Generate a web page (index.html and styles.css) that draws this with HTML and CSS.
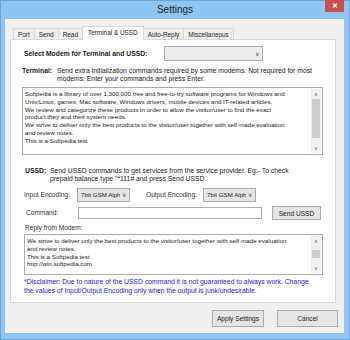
FILE: index.html
```html
<!DOCTYPE html>
<html lang="en">

<head>
    <meta charset="utf-8">
    <title>Settings</title>
    <link rel="stylesheet" href="styles.css">
</head>

<body>
    <div class="vindue">
        <div class="titel">
            <span class="titel-plads"></span>
            <span class="titel-tekst">Settings</span>
            <button class="luk">&#x2715;</button>
        </div>

        <div class="klient">
            <div class="faner">
                <span class="fane">Port</span>
                <span class="fane">Send</span>
                <span class="fane">Read</span>
                <span class="fane valgt">Terminal &amp; USSD</span>
                <span class="fane">Auto-Reply</span>
                <span class="fane">Miscellaneous</span>
            </div>

            <div class="panel">
                <div class="modem-linje">
                    <b>Select Modem for Terminal and USSD:</b>
                    <div class="vaelg bred"><span></span><i class="pil">&#x2228;</i></div>
                </div>

                <div class="info terminal">
                    <b>Terminal:</b>
                    <p>Send extra initialization commands required by some modems. Not required for most<br>modems. Enter your commands and press Enter.</p>
                </div>

                <div class="tekstboks stor">
                    <div class="tekst">
                        Softpedia is a library of over 1,300,000 free and free-to-try software programs for Windows and<br>
                        Unix/Linux, games, Mac software, Windows drivers, mobile devices and IT-related articles.<br>
                        We review and categorize these products in order to allow the visitor/user to find the exact<br>
                        product they and their system needs.<br>
                        We strive to deliver only the best products to the visitor/user together with self-made evaluation<br>
                        and review notes.<br>
                        This is a Softpedia test
                    </div>
                    <div class="rulle">
                        <span class="rulle-pil">&#x2227;</span>
                        <span class="rulle-greb"></span>
                        <span class="rulle-pil">&#x2228;</span>
                    </div>
                </div>

                <div class="info ussd">
                    <b>USSD:</b>
                    <p>Send USSD commands to get services from the service provider. Eg:- To check<br>prepaid balance type "*111# and press Send USSD.</p>
                </div>

                <div class="kodning">
                    <span class="etiket">Input Encoding:</span>
                    <div class="vaelg lille"><span>7bit GSM Alph</span><i class="pil">&#x2228;</i></div>
                    <span class="etiket ud">Output Encoding:</span>
                    <div class="vaelg lille"><span>7bit GSM Alph</span><i class="pil">&#x2228;</i></div>
                </div>

                <div class="kommando">
                    <span class="etiket">Command:</span>
                    <div class="felt"></div>
                    <button class="knap send">Send USSD</button>
                </div>

                <div class="svar-titel">Reply from Modem:</div>

                <div class="tekstboks svar">
                    <div class="tekst">
                        We strive to deliver only the best products to the visitor/user together with self-made evaluation<br>
                        and review notes.<br>
                        This is a Softpedia test<br>
                        http://win.softpedia.com
                    </div>
                    <div class="rulle">
                        <span class="rulle-pil">&#x2227;</span>
                        <span class="rulle-greb"></span>
                        <span class="rulle-pil">&#x2228;</span>
                    </div>
                </div>

                <p class="advarsel">*Disclaimer: Due to nature of the USSD command it is not guaranteed to always work. Change<br>the values of Input/Output Encoding only when the output is junk/undesirable.</p>
            </div>

            <div class="knapper">
                <button class="knap bund">Apply Settings</button>
                <button class="knap bund">Cancel</button>
            </div>
        </div>
    </div>
</body>

</html>
```

FILE: styles.css
```css
body {
    margin: 0;
    font-family: "Liberation Sans", Arial, sans-serif;
    color: #1b1b1b;
}

.vindue {
    width: 350px;
    height: 340px;
    box-sizing: border-box;
    background-color: #8ec5f1;
    border: 1px solid #6aa6dc;
    display: flex;
    flex-direction: column;
}

/* TITELLINJEN */

.titel {
    height: 18px;
    display: flex;
    align-items: flex-start;
}

.titel-plads {
    width: 24px;
}

.titel-tekst {
    flex: 1;
    text-align: center;
    font-size: 10px;
    line-height: 18px;
    color: #222;
}

.luk {
    width: 19px;
    height: 12px;
    margin-right: 5px;
    margin-top: -1px;
    border: none;
    padding: 0;
    background-color: #c75050;
    color: white;
    font-size: 7px;
    font-weight: bold;
    line-height: 12px;
}

.klient {
    flex: 1;
    margin: 0 5px 6px 4px;
    background-color: #f0f0f0;
    display: flex;
    flex-direction: column;
}

/* FANERNE */

.faner {
    display: flex;
    align-items: flex-end;
    padding-left: 8px;
    margin-top: 7px;
    height: 13px;
}

.fane {
    height: 11px;
    box-sizing: border-box;
    border: 1px solid #d9d9d9;
    border-bottom: none;
    margin-right: -1px;
    background-color: #f0f0f0;
    font-size: 6.4px;
    line-height: 11px;
    padding: 0 4px;
}

.fane.valgt {
    background-color: white;
    position: relative;
    z-index: 1;
    margin-bottom: -1px;
    height: 14px;
    line-height: 12px;
    padding: 0 5px;
}

.panel {
    margin-left: 5px;
    width: 326px;
    height: 264px;
    box-sizing: border-box;
    background-color: white;
    border: 1px solid #d9d9d9;
    font-size: 6.8px;
    line-height: 8px;
}

.panel p {
    margin: 0;
}

.modem-linje {
    display: flex;
    align-items: center;
    margin: 6px 0 0 13px;
    height: 15px;
}

.modem-linje b {
    width: 140px;
    font-size: 6.8px;
}

.vaelg {
    height: 15px;
    box-sizing: border-box;
    border: 1px solid #acacac;
    background-color: #ececec;
    display: flex;
    align-items: center;
    justify-content: space-between;
    padding: 0 3px;
    white-space: nowrap;
}

.vaelg.bred {
    width: 99px;
}

.vaelg.lille {
    width: 53px;
    height: 14px;
    background-color: #e5e5e5;
    font-size: 6.2px;
    padding: 0 3px 0 3px;
    gap: 2px;
}

.vaelg.lille span {
    overflow: hidden;
}

.pil {
    font-style: normal;
    font-size: 6px;
    color: #444;
}

.info {
    display: flex;
    margin-left: 11px;
}

.terminal {
    margin-top: 6px;
}

.terminal b {
    width: 35px;
}

.ussd {
    margin-top: 12px;
    margin-left: 14px;
}

.ussd b {
    width: 25px;
}

/* TEKSTBOKSE */

.tekstboks {
    display: flex;
    border: 1px solid #acacac;
    box-sizing: border-box;
    width: 301px;
    margin-left: 11px;
    overflow: hidden;
}

.tekstboks.stor {
    margin-top: 4px;
    height: 68px;
}

.tekstboks.svar {
    margin-left: 13px;
    width: 299px;
    height: 41px;
    margin-top: 2px;
}

.tekst {
    flex: 1;
    padding: 2px 2px;
    white-space: nowrap;
    overflow: hidden;
    font-size: 6.2px;
    line-height: 7.8px;
}

.rulle {
    width: 10px;
    margin: 1px 1px 1px 0;
    background-color: #f0f0f0;
    display: flex;
    flex-direction: column;
    align-items: center;
}

.rulle-pil {
    font-size: 5px;
    line-height: 10px;
    height: 10px;
    color: #555;
}

.rulle-greb {
    flex: 1;
    width: 8px;
    background-color: #cdcdcd;
    margin-bottom: 5px;
}

.svar .rulle-greb {
    flex: 0 0 8px;
    margin-top: 4px;
    margin-bottom: auto;
}

.kodning {
    display: flex;
    align-items: center;
    margin: 5px 0 0 13px;
}

.etiket {
    color: #333;
    font-size: 6.6px;
}

.kodning .etiket {
    width: 53px;
}

.kodning .etiket.ud {
    width: 57px;
    margin-left: 16px;
}

.kommando {
    display: flex;
    align-items: center;
    margin: 4px 0 0 15px;
}

.kommando .etiket {
    width: 52px;
}

.felt {
    width: 184px;
    height: 12px;
    box-sizing: border-box;
    border: 1px solid #acacac;
}

.knap {
    border: 1px solid #acacac;
    background-color: #e5e5e5;
    font-family: "Liberation Sans", Arial, sans-serif;
    font-size: 6.6px;
    color: #1b1b1b;
    padding: 0;
}

.knap.send {
    width: 49px;
    height: 14px;
    margin-left: 10px;
}

.svar-titel {
    margin: 4px 0 0 14px;
    color: #333;
    font-size: 6.6px;
}

.advarsel {
    color: #2323e6;
    margin: 3px 0 0 13px !important;
    line-height: 8.5px;
}

/* KNAPPERNE I BUNDEN */

.knapper {
    display: flex;
    justify-content: flex-end;
    margin-top: 7px;
    padding-right: 6px;
    gap: 13px;
}

.knap.bund {
    width: 52px;
    height: 17px;
}

.knap.bund:last-child {
    width: 61px;
}
```
